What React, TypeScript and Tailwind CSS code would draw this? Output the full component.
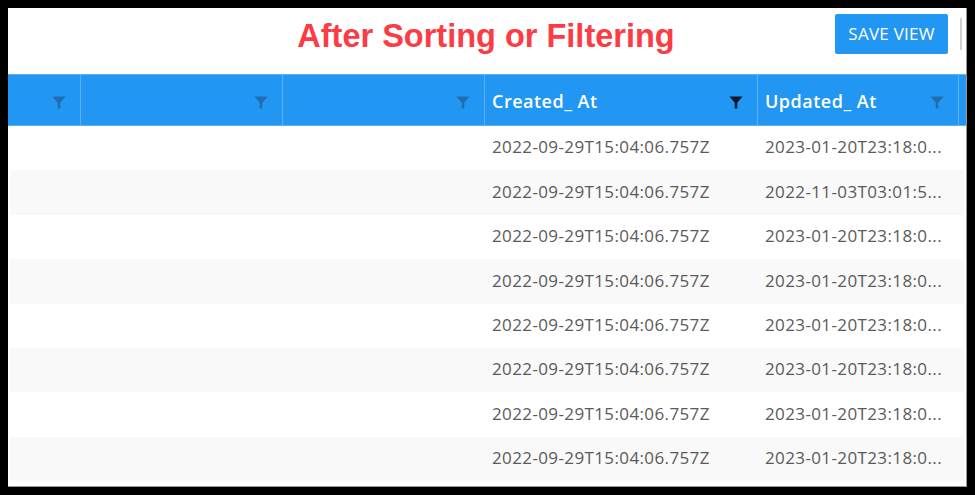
import React from 'react';

const columns = ['w-[73px]', 'w-[202px]', 'w-[202px]', 'w-[273px]', 'w-[201px]'];

const createdAt = '2022-09-29T15:04:06.757Z';
const updatedRows = [
  '2023-01-20T23:18:0...',
  '2022-11-03T03:01:5...',
  '2023-01-20T23:18:0...',
  '2023-01-20T23:18:0...',
  '2023-01-20T23:18:0...',
  '2023-01-20T23:18:0...',
  '2023-01-20T23:18:0...',
  '2023-01-20T23:18:0...',
];

const FilterIcon = ({ active = false }: { active?: boolean }) => (
  <svg
    width="14"
    height="13"
    viewBox="0 0 14 13"
    className={`mt-[4px] ${active ? 'fill-[#0b1a2a]' : 'fill-[#1f6fb0]'}`}
  >
    <path d="M0.5 0.5h13L8.3 6.8V12.5H5.7V6.8z" />
  </svg>
);

const HeaderCell = ({
  label,
  width,
  active,
  last,
}: {
  label?: string;
  width: string;
  active?: boolean;
  last?: boolean;
}) => (
  <div
    className={`${width} h-full shrink-0 flex items-center justify-between pl-[7px] pr-[14px] ${
      last ? '' : 'border-r border-[#5cb1f5]'
    }`}
  >
    <span className="mt-[1px] text-[18px] leading-[24px] font-semibold text-white tracking-[0.5px]">{label}</span>
    <FilterIcon active={active} />
  </div>
);

const App = () => {
  return (
    <div className="w-[975px] h-[495px] bg-black p-2 font-['Open_Sans',sans-serif] overflow-hidden">
      <div className="w-[959px] h-[479px] bg-white flex flex-col border-r border-b border-[#9a9a9a]">
        {/* Title bar */}
        <div className="relative h-[66px] shrink-0 flex items-start justify-center">
          <h1 className="mt-[8px] ml-[-2px] text-[32.5px] leading-[40px] font-bold text-[#fb3c44] font-['Liberation_Sans',sans-serif]">
            After Sorting or Filtering
          </h1>
          <button className="absolute left-[827px] top-[6px] w-[113px] h-[40px] pb-[2px] rounded-[2px] bg-[#2196f3] text-white text-[17px] tracking-[0.25px] leading-none">
            SAVE VIEW
          </button>
          <div className="absolute left-[952px] top-[10px] w-[2px] h-[32px] bg-[#d0d0d0]" />
        </div>

        {/* Table header */}
        <div className="h-[52px] shrink-0 flex items-center bg-[#2196f3] border-t border-b border-[#5cb1f5]">
          <HeaderCell width={columns[0]} />
          <HeaderCell width={columns[1]} />
          <HeaderCell width={columns[2]} />
          <HeaderCell width={columns[3]} label="Created_ At" active />
          <HeaderCell width={columns[4]} label="Updated_ At" />
        </div>

        {/* Rows */}
        <div className="flex flex-col">
          {updatedRows.map((updated, i) => (
            <div
              key={i}
              className={`h-[44.4px] flex items-center mx-[2px] pb-[2px] text-[17px] tracking-[0.38px] text-[#5a5a5a] ${
                i % 2 === 1 ? 'bg-[#f9f9f9]' : 'bg-white'
              }`}
            >
              <div className="w-[474px] shrink-0" />
              <div className="w-[273px] shrink-0 pl-[8px]">{createdAt}</div>
              <div className="w-[200px] shrink-0 pl-[8px]">{updated}</div>
            </div>
          ))}
        </div>
      </div>
    </div>
  );
};

export default App;
